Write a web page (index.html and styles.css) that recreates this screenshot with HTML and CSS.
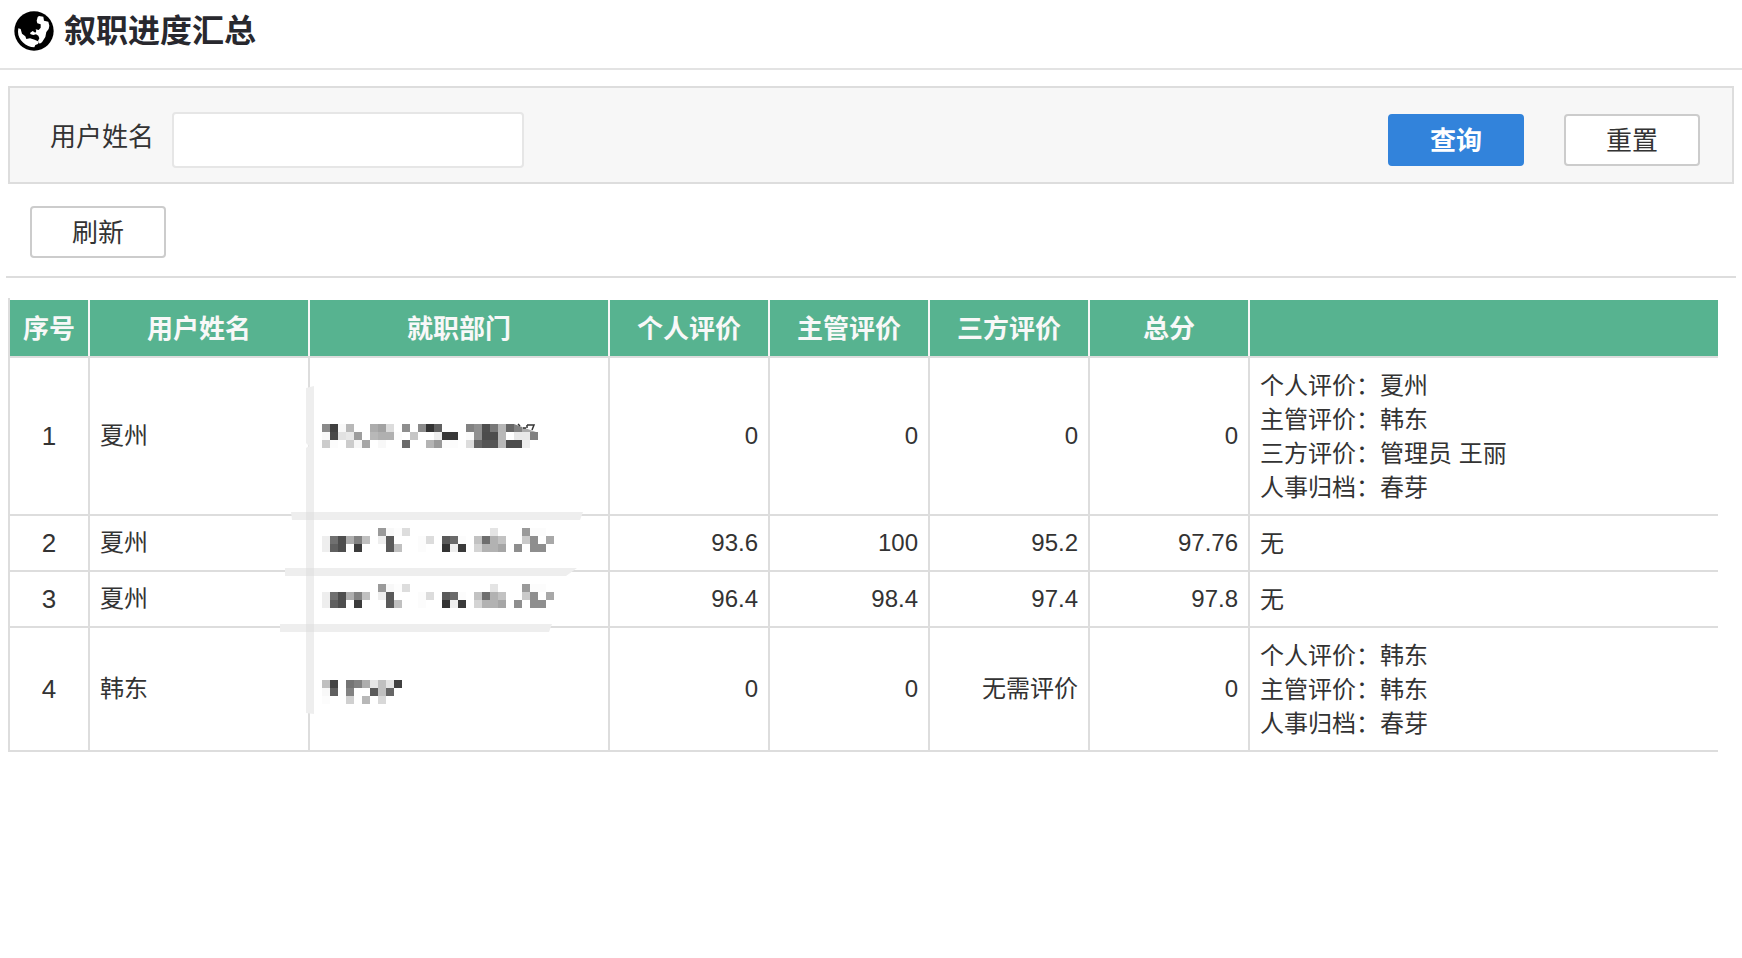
FILE: index.html
```html
<!DOCTYPE html>
<html lang="zh-CN">
<head>
<meta charset="utf-8">
<title>叙职进度汇总</title>
<link rel="stylesheet" href="styles.css">
</head>
<body>
<header class="page-header">
  <svg class="globe" viewBox="0 0 120 120" aria-hidden="true">
    <circle cx="60" cy="60" r="59"/>
    <path fill="#fff" d="M71 18L75 15L88 17L90 29L103 32L106 44L104 54L97 63L94 78L84 94L77 98L72 90L76 82L73 74L66 70L58 72L50 70L48 66L56 60L64 65L67 60L65 55L74 57L80 50L80 40L70 37L68 29Z"/>
    <path fill="#fff" d="M13 52L20 54L24 68L34 76L37 84L48 82L62 86L75 92L72 99L64 102L61 109C36 107 12 88 12 62Z"/>
  </svg>
  <h1 class="page-title">叙职进度汇总</h1>
</header>
<main class="content">
  <form class="search-panel">
    <label class="field-label" for="user-name">用户姓名</label>
    <input class="field-input" id="user-name" type="text">
    <div class="search-actions">
      <button class="btn btn-primary" type="button">查询</button>
      <button class="btn" type="reset">重置</button>
    </div>
  </form>
  <div class="toolbar">
    <button class="btn" type="button">刷新</button>
  </div>
  <div class="table-wrap">
    <table class="grid">
      <colgroup>
        <col class="col-index"><col class="col-name"><col class="col-dept">
        <col class="col-score"><col class="col-score"><col class="col-score"><col class="col-score"><col>
      </colgroup>
      <thead>
        <tr><th>序号</th><th>用户姓名</th><th>就职部门</th><th>个人评价</th><th>主管评价</th><th>三方评价</th><th>总分</th><th></th></tr>
      </thead>
      <tbody>
        <tr><td class="index">1</td><td>夏州</td><td></td><td class="num">0</td><td class="num">0</td><td class="num">0</td><td class="num">0</td><td>个人评价：夏州<br>主管评价：韩东<br>三方评价：管理员 王丽<br>人事归档：春芽</td></tr>
        <tr><td class="index">2</td><td>夏州</td><td></td><td class="num">93.6</td><td class="num">100</td><td class="num">95.2</td><td class="num">97.76</td><td>无</td></tr>
        <tr><td class="index">3</td><td>夏州</td><td></td><td class="num">96.4</td><td class="num">98.4</td><td class="num">97.4</td><td class="num">97.8</td><td>无</td></tr>
        <tr><td class="index">4</td><td>韩东</td><td></td><td class="num">0</td><td class="num">0</td><td class="num">无需评价</td><td class="num">0</td><td>个人评价：韩东<br>主管评价：韩东<br>人事归档：春芽</td></tr>
      </tbody>
    </table>
    <svg class="redaction" width="304" height="330" viewBox="0 0 304 330" aria-hidden="true">
      <path fill="#eee" d="M26 2L34 0V328L26 327V62L29 60L26 57Z"/>
      <path fill="#eee" d="M11 126H303L300 134H12ZM5 182H297L286 190H5ZM0 238H272L269 246H0Z"/>
      <path fill="#e5e5e5" d="M26 126h8v8h-8zM26 182h8v8h-8zM26 238h8v8h-8z"/>
      <g id="mosaic" shape-rendering="crispEdges"></g>
      <path fill="#808080" d="M234 38L242 41V46H234Z"/>
      <path fill="#aaa" d="M242 41L256 46H242Z"/>
      <path fill="none" stroke="#333" stroke-width="1.5" d="M238 38l2 2M243 42h3M247 39h7l-2 5M247 39v3"/>
    </svg>
  </div>
</main>
<script src="mosaic.js"></script>
</body>
</html>
```
FILE: styles.css
```css
* {
  box-sizing: border-box;
}

body {
  margin: 0;
  background: #fff;
  color: #333;
  font: 24px/34px "Liberation Sans", "Noto Sans CJK SC", sans-serif;
}

.page-header {
  display: flex;
  align-items: center;
  gap: 10px;
  height: 70px;
  padding: 0 14px 6px;
  border-bottom: 2px solid #e3e3e3;
}

.globe {
  width: 40px;
  height: 40px;
}

.page-title {
  margin: 0;
  color: #28282e;
  font-size: 32px;
  font-weight: 600;
  line-height: 44px;
}

.content {
  padding: 16px 6px;
}

.search-panel {
  display: flex;
  align-items: flex-start;
  margin: 0 2px;
  padding: 24px 32px 14px 40px;
  border: 2px solid #ddd;
  background: #f7f7f7;
}

.field-label {
  width: 122px;
  padding-top: 8px;
  font-size: 26px;
}

.field-input {
  width: 352px;
  height: 56px;
  padding: 0 12px;
  border: 2px solid #e6e6e6;
  border-radius: 4px;
  background: #fff;
  color: inherit;
  font: inherit;
}

.search-actions {
  display: flex;
  gap: 40px;
  margin-left: auto;
  padding-top: 2px;
}

.btn {
  width: 136px;
  height: 52px;
  padding: 2px 0 0;
  border: 2px solid #ccc;
  border-radius: 4px;
  background: #fff;
  color: #333;
  font: inherit;
  font-size: 26px;
  line-height: 46px;
}

.btn-primary {
  border-color: #3283db;
  background: #3283db;
  color: #fff;
  font-weight: 700;
}

.toolbar {
  padding: 22px 24px 18px;
  border-bottom: 2px solid #ddd;
}

.toolbar .btn {
  display: block;
}

.table-wrap {
  position: relative;
  margin: 20px 18px 0 2px;
  padding-top: 2px;
  border-left: 2px solid #ddd;
}

.grid {
  width: 100%;
  table-layout: fixed;
  border-collapse: separate;
  border-spacing: 0;
}

.col-index {
  width: 80px;
}

.col-name {
  width: 220px;
}

.col-dept {
  width: 300px;
}

.col-score {
  width: 160px;
}

.grid th {
  height: 58px;
  padding: 2px 2px 0 0;
  border-bottom: 2px solid #ddd;
  background: linear-gradient(#f8f8f8, #f8f8f8) right / 2px 100% no-repeat #57b390;
  color: #f8f8f8;
  font-size: 26px;
  font-weight: 700;
}

.grid th:last-child {
  background: #57b390;
}

.grid td {
  padding: 10px;
  border-right: 2px solid #ddd;
  border-bottom: 2px solid #ddd;
}

.grid td:last-child {
  padding: 11px 10px 9px;
  border-right: 0;
}

.grid .index {
  font-size: 26px;
  text-align: center;
}

.grid .num {
  text-align: right;
}

.redaction {
  position: absolute;
  top: 88px;
  left: 270px;
}
```
FILE: mosaic.js
```javascript
// Each block is a list of rows; each two-digit hex value is one 8px grey tile, ".." is empty.
const CELL = 8;
const shared = [
  ".. .. .. .. .. .. .. 9a f8 fd dd .. .. .. .. .. .. .. .. .. .. e4 .. .. .. 9a fc fc",
  "ee 70 4e ae 82 c0 .. ee 5a .. .. .. fc dc .. 5a 6a fc .. c2 6e b2 c2 .. .. ca 8e .. a8",
  "ee 60 4e .. 3c .. .. .. 5a c0 .. .. fc .. .. 33 ee 3a .. d4 b2 b2 a6 .. 8e .. 8e 8e",
];
const blocks = [
  { y: 38, rows: [
    "8a 40 f8 b8 .. .. ac a2 dc .. 8e .. 8a 33 60 .. .. .. 82 90 4e 77 b6 66",
    "f8 48 e2 e8 9e .. b8 b0 b0 fc .. c6 .. .. ee 38 38 .. fa 90 4c 4c b8 .. e8 e8 80",
    "cc fc .. cc f6 a6 .. f8 .. .. 6a .. .. b4 9a fc fc .. dd 66 55 55 b8 4c 4c ee",
  ] },
  { y: 142, rows: shared },
  { y: 198, rows: shared },
  { y: 294, rows: [
    "c0 44 .. 74 82 ae e6 c0 e4 40",
    "f8 60 .. 82 .. .. 5a c0 66",
    "fc .. .. d0 .. b8 .. d8",
  ] },
];

const group = document.getElementById("mosaic");
blocks.forEach(({ y, rows }) => {
  rows.forEach((row, r) => {
    row.split(" ").forEach((value, c) => {
      if (value === "..") return;
      const tile = document.createElementNS("http://www.w3.org/2000/svg", "rect");
      tile.setAttribute("x", 42 + c * CELL);
      tile.setAttribute("y", y + r * CELL);
      tile.setAttribute("width", CELL);
      tile.setAttribute("height", CELL);
      tile.setAttribute("fill", "#" + value.repeat(3));
      group.appendChild(tile);
    });
  });
});
```
